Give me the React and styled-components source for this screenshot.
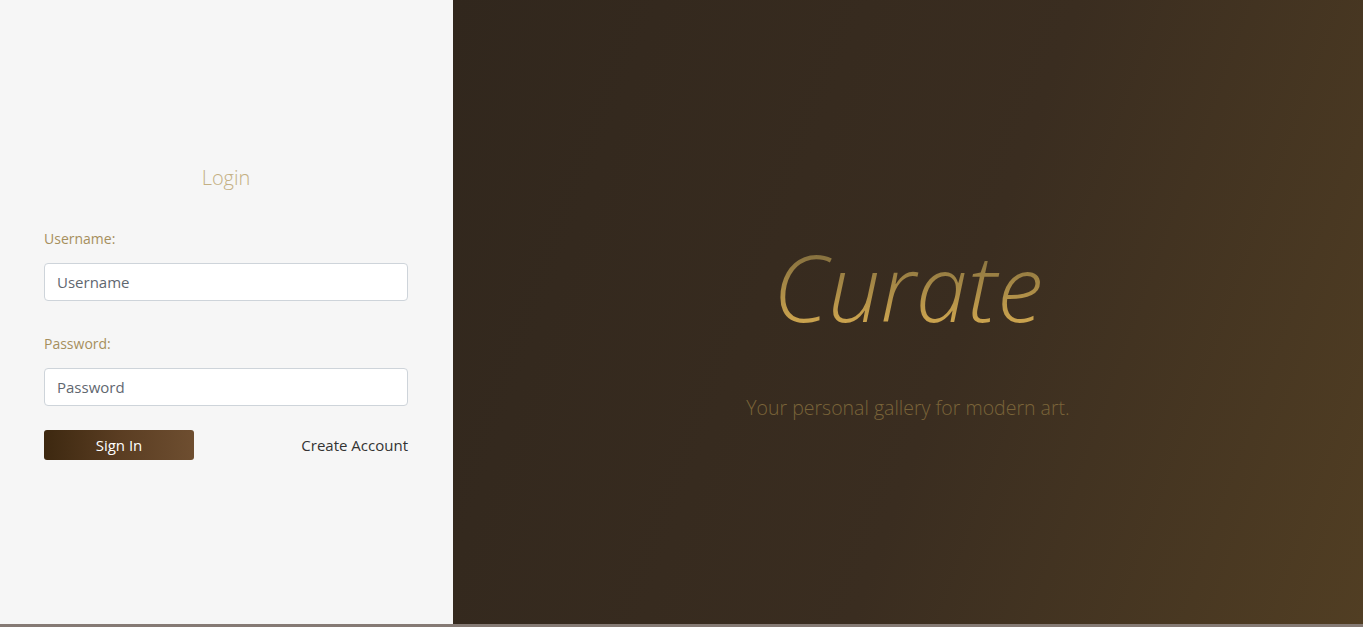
import React from "react";
import styled, { createGlobalStyle } from "styled-components";

const GlobalStyle = createGlobalStyle`
  html, body {
    margin: 0;
    padding: 0;
    background: #857a74;
    font-family: "Open Sans", "Noto Sans", sans-serif;
  }
  * {
    box-sizing: border-box;
  }
`;

const Page = styled.div`
  display: grid;
  grid-template-columns: 453px 1fr;
  height: 624px;
`;

const LoginPanel = styled.div`
  background: #f6f6f6;
  display: flex;
  flex-direction: column;
  justify-content: center;
  padding: 0 45px 1px 44px;
`;

const Title = styled.h2`
  margin: 0 0 38px;
  text-align: center;
  font-size: 20px;
  font-weight: 300;
  color: #c4b083;
`;

const Field = styled.div`
  display: flex;
  flex-direction: column;
  margin-bottom: ${(p) => (p.$last ? "24px" : "33px")};
`;

const Label = styled.label`
  font-size: 14px;
  color: #a68f5d;
  margin-bottom: 15px;
`;

const Input = styled.input`
  height: 38px;
  padding: 0 12px;
  font-family: inherit;
  font-size: 15px;
  color: #495057;
  background: #fff;
  border: 1px solid #ced4da;
  border-radius: 4px;
  outline: none;

  &::placeholder {
    color: #5f6770;
  }
`;

const Actions = styled.div`
  display: flex;
  justify-content: space-between;
  align-items: center;
`;

const SignIn = styled.button`
  width: 150px;
  height: 30px;
  border: none;
  border-radius: 3px;
  font-family: inherit;
  font-size: 15px;
  color: #fff;
  background: linear-gradient(90deg, #3d2810 0%, #5a3d22 50%, #6e4e30 100%);
  cursor: pointer;
`;

const LinkButton = styled.a`
  font-size: 15px;
  color: #333;
  text-decoration: none;
`;

const Hero = styled.div`
  background: linear-gradient(110deg, #31271d 0%, #3a2d20 55%, #513e23 100%);
  display: flex;
  flex-direction: column;
  align-items: center;
  justify-content: center;
  padding-top: 28px;
`;

const Brand = styled.h1`
  margin: 0;
  font-size: 93px;
  font-weight: 300;
  font-style: italic;
  line-height: 1.2;
  background: linear-gradient(180deg, #85703f 20%, #c9a24e 80%);
  -webkit-background-clip: text;
  background-clip: text;
  color: transparent;
`;

const Tagline = styled.p`
  margin: 52px 0 0;
  font-size: 19.5px;
  font-weight: 300;
  color: #7a6439;
`;

export default function App() {
  return (
    <>
      <GlobalStyle />
      <Page>
        <LoginPanel>
          <Title>Login</Title>
          <Field>
            <Label>Username:</Label>
            <Input placeholder="Username" />
          </Field>
          <Field $last>
            <Label>Password:</Label>
            <Input type="password" placeholder="Password" />
          </Field>
          <Actions>
            <SignIn>Sign In</SignIn>
            <LinkButton href="#">Create Account</LinkButton>
          </Actions>
        </LoginPanel>
        <Hero>
          <Brand>Curate</Brand>
          <Tagline>Your personal gallery for modern art.</Tagline>
        </Hero>
      </Page>
    </>
  );
}
